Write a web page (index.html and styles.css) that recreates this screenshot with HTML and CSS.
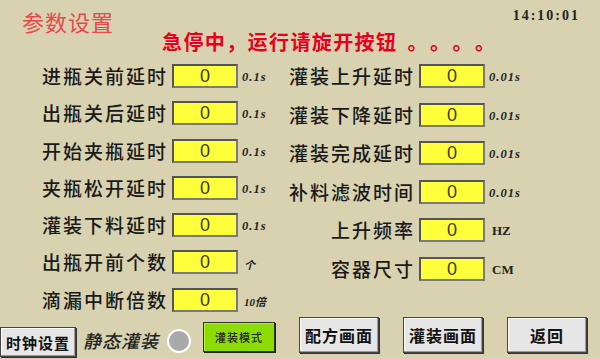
FILE: index.html
```html
<!DOCTYPE html>
<html lang="zh">
<head>
<meta charset="utf-8">
<title>参数设置</title>
<link rel="stylesheet" href="styles.css">
</head>
<body>
<div class="screen">
  <header class="top">
    <div class="title-row">
      <div class="title">参数设置</div>
      <div class="clock">14:10:01</div>
    </div>
    <div class="msg">急停中，运行请旋开按钮<span class="dots">。。。。</span></div>
  </header>
  <main class="main">
    <section class="col col-left">
      <div class="row"><span class="lbl">进瓶关前延时</span><span class="box">0</span><span class="unit">0.1s</span></div>
      <div class="row"><span class="lbl">出瓶关后延时</span><span class="box">0</span><span class="unit">0.1s</span></div>
      <div class="row"><span class="lbl">开始夹瓶延时</span><span class="box">0</span><span class="unit">0.1s</span></div>
      <div class="row"><span class="lbl">夹瓶松开延时</span><span class="box">0</span><span class="unit">0.1s</span></div>
      <div class="row"><span class="lbl">灌装下料延时</span><span class="box">0</span><span class="unit">0.1s</span></div>
      <div class="row"><span class="lbl">出瓶开前个数</span><span class="box">0</span><span class="unit cn">个</span></div>
      <div class="row"><span class="lbl">滴漏中断倍数</span><span class="box">0</span><span class="unit cn">10倍</span></div>
    </section>
    <section class="col col-right">
      <div class="row"><span class="lbl">灌装上升延时</span><span class="box">0</span><span class="unit">0.01s</span></div>
      <div class="row"><span class="lbl">灌装下降延时</span><span class="box">0</span><span class="unit">0.01s</span></div>
      <div class="row"><span class="lbl">灌装完成延时</span><span class="box">0</span><span class="unit">0.01s</span></div>
      <div class="row"><span class="lbl">补料滤波时间</span><span class="box">0</span><span class="unit">0.01s</span></div>
      <div class="row"><span class="lbl">上升频率</span><span class="box">0</span><span class="unit big">HZ</span></div>
      <div class="row"><span class="lbl">容器尺寸</span><span class="box">0</span><span class="unit big">CM</span></div>
    </section>
  </main>
  <footer class="foot">
    <button class="btn btn-clock">时钟设置</button>
    <span class="mode-label">静态灌装</span>
    <span class="lamp"></span>
    <button class="btn-green">灌装模式</button>
    <button class="btn btn-nav btn-recipe">配方画面</button>
    <button class="btn btn-nav">灌装画面</button>
    <button class="btn btn-nav">返回</button>
  </footer>
</div>
</body>
</html>
```

FILE: styles.css
```css
* { box-sizing: border-box; }
html, body { margin: 0; padding: 0; }
body {
  background: #d8d2b0;
  font-family: "Noto Sans CJK SC", "Noto Sans", sans-serif;
}
.screen {
  width: 600px;
  height: 359px;
  overflow: hidden;
  background: #d8d2b0;
  position: relative;
}
.top {
  padding-top: 9px;
}
.title-row {
  display: flex;
  justify-content: space-between;
  align-items: flex-start;
  height: 21px;
}
.title {
  margin-left: 22px;
  font-size: 22px;
  line-height: 24px;
  letter-spacing: 1px;
  color: #e84848;
  font-weight: 400;
}
.clock {
  margin-right: 20px;
  font-family: "Liberation Serif", "DejaVu Serif", serif;
  font-weight: bold;
  font-size: 14px;
  line-height: 14px;
  letter-spacing: 2px;
  color: #222;
}
.msg {
  margin-left: 162px;
  font-size: 20px;
  line-height: 24px;
  font-weight: 700;
  letter-spacing: 1.4px;
  color: #e8001c;
  white-space: nowrap;
}
.dots {
  display: inline-block;
  margin-left: 10px;
  letter-spacing: 12.5px;
}
.main {
  display: flex;
  padding-left: 42px;
  margin-top: 10px;
}
.col {
  display: flex;
  flex-direction: column;
}
.col-left {
  width: 246px;
  gap: 13.3px;
}
.col-right {
  gap: 14.5px;
}
.row {
  display: grid;
  align-items: center;
  height: 24px;
}
.col-left .row {
  grid-template-columns: 126px 66px auto;
  column-gap: 4px;
}
.col-right .row {
  grid-template-columns: 127px 66px auto;
  column-gap: 4px;
}
.lbl {
  font-size: 19px;
  line-height: 24px;
  letter-spacing: 2px;
  color: #1a1a1a;
  font-weight: 500;
  white-space: nowrap;
}
.col-right .lbl {
  text-align: right;
}
.box {
  display: block;
  height: 24px;
  background: #ffff3c;
  border: 2px solid;
  border-color: #555 #7a7a7a #7a7a7a #555;
  text-align: center;
  font-family: "Liberation Sans", Arial, sans-serif;
  font-size: 18px;
  line-height: 20px;
  color: #3c3c10;
}
.unit {
  font-family: "Liberation Serif", "DejaVu Serif", serif;
  font-style: italic;
  font-weight: bold;
  font-size: 12.5px;
  letter-spacing: 1px;
  color: #222;
  white-space: nowrap;
  padding-top: 3px;
}
.unit.cn {
  font-family: "Liberation Serif", "Noto Sans CJK SC", serif;
  font-size: 11px;
  margin-left: 2px;
  letter-spacing: 0;
}
.unit.big {
  font-style: normal;
  font-size: 13px;
  letter-spacing: 0;
  margin-left: 3px;
  padding-top: 2px;
}
.foot {
  position: absolute;
  left: 0;
  top: 317px;
  width: 600px;
  height: 42px;
  display: flex;
  align-items: flex-start;
}
.btn {
  font-family: "Noto Sans CJK SC", sans-serif;
  font-weight: 700;
  color: #111;
  background: #e6e6e6;
  border: 1px solid #444;
  box-shadow: 1px 1px 0 #333, inset -1px -1px 0 #9a9a9a, inset 1px 1px 0 #fff;
  padding: 0;
  cursor: pointer;
}
.btn-clock {
  margin-top: 10px;
  width: 76px;
  height: 30px;
  font-size: 15px;
  letter-spacing: 1px;
}
.mode-label {
  margin-top: 12px;
  margin-left: 7px;
  font-size: 18px;
  line-height: 22px;
  font-style: italic;
  font-weight: 500;
  letter-spacing: 1px;
  color: #222;
  width: 78px;
}
.lamp {
  margin-top: 12px;
  margin-left: 6px;
  width: 24px;
  height: 24px;
  border-radius: 50%;
  background: #a9a9a9;
  border: 2.5px solid #fff;
}
.btn-green {
  margin-top: 5px;
  margin-left: 12px;
  width: 72px;
  height: 30px;
  background: #8cdc00;
  border: 1px solid #333;
  box-shadow: 1px 1px 0 #222, inset 1px 1px 0 #b8f040;
  font-family: "Noto Sans CJK SC", sans-serif;
  font-size: 11px;
  font-weight: 500;
  color: #222;
  letter-spacing: 1px;
  padding: 0;
}
.btn-nav {
  width: 80px;
  height: 36px;
  font-size: 16px;
  letter-spacing: 1px;
  margin-left: 24px;
}
.btn-recipe {
  margin-left: 24px;
}
```
